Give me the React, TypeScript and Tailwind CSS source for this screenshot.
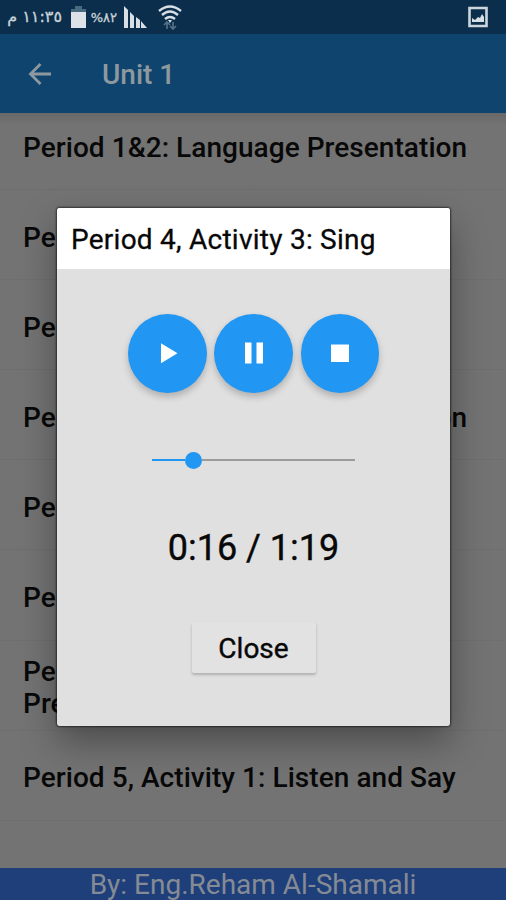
import type { ReactNode } from "react";

const periods = [
  "Period 1&2: Language Presentation",
  "Period 3, Activity 1: Listen",
  "Period 3, Activity 2: Read",
  "Period 3&4: Language Presentation",
  "Period 4, Activity 2: Say",
  "Period 4, Activity 3: Sing",
  "Period 5&6: Language Presentation",
  "Period 5, Activity 1: Listen and Say",
];

function StatusBar() {
  return (
    <div className="flex h-[34px] shrink-0 items-center bg-[#0a2e4b] pl-[7px] pr-[18px] text-[#cbd3da]">
      <div dir="rtl" className="w-[55px] whitespace-nowrap font-['DejaVu_Sans',sans-serif] text-[16px] leading-none [-webkit-text-stroke:0.3px_#cbd3da]">
        ١١:٣٥ م
      </div>
      <svg className="ml-[8px] h-[24px] w-[17px]" viewBox="0 0 17 24">
        <path d="M5 1h7v3h4v3H1V4h4z" fill="#49697e" />
        <path d="M1 7h15v16H1z" fill="#dce2e7" />
      </svg>
      <div dir="rtl" className="ml-[2px] w-[28px] whitespace-nowrap font-['DejaVu_Sans',sans-serif] text-[13px] leading-none [-webkit-text-stroke:0.3px_#cbd3da]">
        ٨٢%
      </div>
      <svg className="ml-[6px] h-[24px] w-[25px]" viewBox="0 0 25 24" fill="#d8dfe4">
        <path d="M1 1l4 4v18H1zM7 7l4 4v12H7zM13 12l4 3v8h-4zM18 16l6 7h-6z" />
      </svg>
      <svg className="ml-[9px] h-[26px] w-[26px]" viewBox="0 0 26 26" fill="none" stroke="#d8dfe4" strokeWidth="2.4">
        <path d="M2 7Q13-2 24 7M5 11Q13 4 21 11M8 15Q13 11 18 15" />
        <path d="M11 16h4l-2 3z" fill="#d8dfe4" stroke="none" />
        <path d="M10 25v-7m-3 3l3-3 3 3M16 18v7m-3-3l3 3 3-3" stroke="#547187" strokeWidth="1.7" />
      </svg>
      <svg className="ml-auto h-[22px] w-[20px]" viewBox="0 0 20 22">
        <path d="M1.5 2h17v18h-17z" fill="none" stroke="#cdd6dc" strokeWidth="2.6" />
        <path d="M4 16v-4l3 2 3-3 2 1 2-4 2 3v5z" fill="#d9e0e5" />
      </svg>
    </div>
  );
}

function RoundButton({ children }: { children: ReactNode }) {
  return (
    <button className="flex size-[78.500px] items-center justify-center rounded-full bg-[#2196f3] shadow-[0_4px_7px_rgba(0,0,0,0.22)]">
      <svg className="size-[32px]" viewBox="0 0 32 32" fill="white">
        {children}
      </svg>
    </button>
  );
}

function Player() {
  return (
    <div className="absolute left-[57px] top-[208px] flex h-[518px] w-[393px] flex-col overflow-hidden rounded-[3px] bg-[#e0e0e0]">
      <div className="h-[61px] shrink-0 whitespace-nowrap bg-white pl-[14px] text-[28px] leading-[64px] tracking-[0.25px] [-webkit-text-stroke:0.3px_#080808]">
        Period 4, Activity 3: Sing
      </div>
      <div className="flex flex-col items-center pt-[45px]">
        <div className="flex gap-[7.75px]">
          <RoundButton>
            <path d="M10 6.200v20L26.500 16.2z" />
          </RoundButton>
          <RoundButton>
            <path d="M7 5.5h6.5v21H7zM18.500 5.5H25v21h-6.500z" />
          </RoundButton>
          <RoundButton>
            <path d="M7 7.500h18v17.500H7z" />
          </RoundButton>
        </div>
        <div className="mt-[58.500px] flex h-[18px] w-[203px] items-center">
          <div className="h-[2px] w-[33px] bg-[#2196f3]" />
          <div className="size-[17px] rounded-full bg-[#2196f3]" />
          <div className="h-[2px] grow bg-[#9a9c9b]" />
        </div>
        <div className="mt-[58px] h-[42px] whitespace-nowrap text-[36px] leading-[42px] [-webkit-text-stroke:0.4px_#080808]">0:16 / 1:19</div>
        <button className="mt-[53px] h-[51px] w-[124px] rounded-[2px] bg-[#e2e2e2] pt-[2px] text-[28px] leading-[49px] shadow-[0_2px_3px_rgba(0,0,0,0.22)] [-webkit-text-stroke:0.4px_#080808]">
          Close
        </button>
      </div>
    </div>
  );
}

export default function App() {
  return (
    <div className="relative flex h-[900px] w-[506px] flex-col overflow-hidden bg-[#737373] font-['Roboto',sans-serif] text-[#080808]">
      <StatusBar />
      <header className="flex h-[79px] shrink-0 items-center bg-[#0f446e] pl-[28px] text-[#8e999f]">
        <svg className="size-[24px]" viewBox="0 0 24 24" fill="none" stroke="currentColor" strokeWidth="2.8">
          <path d="M23 12H3M12.500 2L2.500 12l10 10" />
        </svg>
        <h1 className="ml-[50px] pt-[3px] text-[28px] font-medium">Unit 1</h1>
      </header>
      <main className="grow overflow-hidden bg-gradient-to-b from-[#686868] via-[#737373] via-[12px] to-[#737373]">
        <ul className="-mt-[13px]">
          {periods.map((title, i) => (
            <li
              key={title}
              className="flex h-[90.1px] items-center border-b border-[#6e6e6e] pl-[23px] pt-[6px] text-[28px] font-medium leading-[32px] tracking-[0.05px]"
            >
              {i === 6 ? (
                <span>
                  Period 5&amp;6: Language
                  <br />
                  Presentation
                </span>
              ) : (
                <span className="whitespace-nowrap">{title}</span>
              )}
            </li>
          ))}
        </ul>
      </main>
      <footer className="h-[32px] shrink-0 overflow-hidden whitespace-nowrap bg-[#1f3f7b] text-center text-[28px] leading-[34px] text-[#858b94]">
        By: Eng.Reham Al-Shamali
      </footer>
      <div className="absolute left-[57px] top-[208px] h-[518px] w-[393px] rounded-[3px] shadow-[0_0_2px_1px_rgba(0,0,0,0.55),0_16px_36px_rgba(0,0,0,0.34)]" />
      <Player />
    </div>
  );
}
